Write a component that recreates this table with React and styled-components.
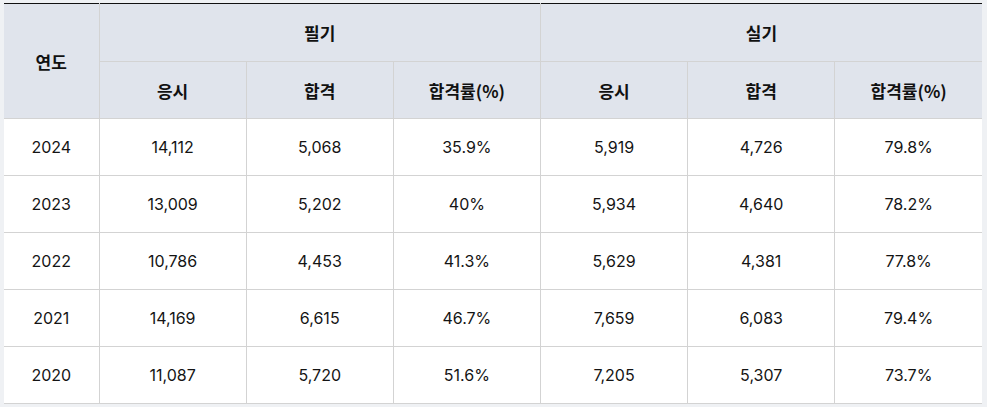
import React from 'react'
import styled, {createGlobalStyle} from 'styled-components'

const GlobalStyle = createGlobalStyle`
    html, body {
        margin: 0;
        background: #eff1f4;
    }
    body {
        padding: 3px 0 0 4px;
        font-family: Inter, "Noto Sans CJK KR", sans-serif;
    }
`;

const Table = styled.table`
    width: 978px;
    border-collapse: collapse;
    table-layout: fixed;
    background: #ffffff;
    border-top: 1px solid #111111;
    color: #141414;
    font-size: 16px;
`;

const Th = styled.th`
    background: #e0e4ec;
    height: ${props => props.top ? 57 : 56}px;
    border: 1px solid #d3d3d3;
    border-top: ${props => props.top ? 'none' : '1px solid #d3d3d3'};
    font-family: "Noto Sans CJK KR", Inter, sans-serif;
    font-weight: 700;
    font-size: 17px;
    color: #111111;
    text-align: center;
    padding: 0;
    &:first-child { border-left: none; }
    &:last-child { border-right: none; }
`;

const Td = styled.td`
    height: 56px;
    border: 1px solid #d3d3d3;
    text-align: center;
    padding: 0;
    &:first-child { border-left: none; }
    &:last-child { border-right: none; }
`;

const rows = [
    ['2024', '14,112', '5,068', '35.9%', '5,919', '4,726', '79.8%'],
    ['2023', '13,009', '5,202', '40%', '5,934', '4,640', '78.2%'],
    ['2022', '10,786', '4,453', '41.3%', '5,629', '4,381', '77.8%'],
    ['2021', '14,169', '6,615', '46.7%', '7,659', '6,083', '79.4%'],
    ['2020', '11,087', '5,720', '51.6%', '7,205', '5,307', '73.7%'],
]

export default function App() {
    return (
        <>
            <GlobalStyle/>
            <Table>
                <colgroup>
                    <col style={{width: 95}}/>
                    <col/><col/><col/><col/><col/><col/>
                </colgroup>
                <thead>
                <tr>
                    <Th rowSpan={2} top>연도</Th>
                    <Th colSpan={3} top>필기</Th>
                    <Th colSpan={3} top>실기</Th>
                </tr>
                <tr>
                    <Th>응시</Th>
                    <Th>합격</Th>
                    <Th>합격률(%)</Th>
                    <Th>응시</Th>
                    <Th>합격</Th>
                    <Th>합격률(%)</Th>
                </tr>
                </thead>
                <tbody>
                {rows.map(r => (
                    <tr key={r[0]}>
                        {r.map((c, i) => <Td key={i}>{c}</Td>)}
                    </tr>
                ))}
                </tbody>
            </Table>
        </>
    )
}
